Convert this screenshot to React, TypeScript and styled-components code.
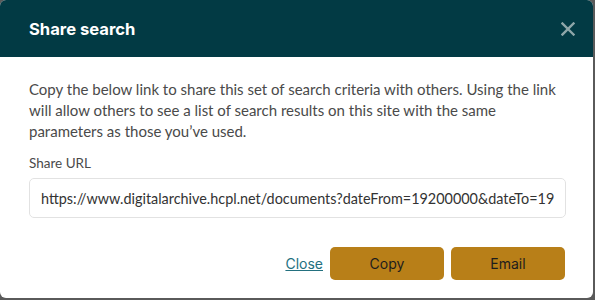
import React from "react";
import styled, { createGlobalStyle } from "styled-components";

const GlobalStyle = createGlobalStyle`
  html, body {
    margin: 0;
    padding: 0;
    background: #5a5a5a;
  }
`;

const StyledModal = styled.div`
  box-sizing: border-box;
  width: 593px;
  height: 298px;
  background: #ffffff;
  border-radius: 6px;
  overflow: hidden;
  display: flex;
  flex-direction: column;
`;

const StyledHeader = styled.div`
  height: 57px;
  background: #023a44;
  display: flex;
  align-items: center;
  justify-content: space-between;
  padding: 0 15px 0 29px;
  box-sizing: border-box;
`;

const StyledTitle = styled.h2`
  margin: 0;
  font-family: Inter, "Liberation Sans", sans-serif;
  font-weight: 700;
  font-size: 16.6px;
  color: #ffffff;
`;

const StyledCloseIcon = styled.button`
  border: none;
  background: none;
  padding: 0;
  width: 20px;
  height: 20px;
  display: flex;
  align-items: center;
  justify-content: center;
  cursor: pointer;
`;

const StyledBody = styled.div`
  padding: 22px 27px 0 29px;
  display: flex;
  flex-direction: column;
  font-family: Lato, "Liberation Sans", sans-serif;
  color: #4a4a4a;
`;

const StyledIntro = styled.p`
  margin: 0 0 13px;
  font-size: 15px;
  line-height: 21px;
`;

const StyledLabel = styled.label`
  font-size: 13.5px;
  line-height: 16px;
  margin-bottom: 7px;
`;

const StyledInput = styled.input`
  box-sizing: border-box;
  width: 537px;
  height: 40px;
  padding: 0 11px;
  border: 1px solid #e2e2e2;
  border-radius: 5px;
  font-family: Lato, "Liberation Sans", sans-serif;
  font-size: 14.4px;
  color: #333333;
  outline: none;
`;

const StyledFooter = styled.div`
  display: flex;
  justify-content: flex-end;
  align-items: center;
  gap: 7px;
  padding: 29px 28px 0 0;
`;

const StyledLink = styled.a`
  font-family: Inter, "Liberation Sans", sans-serif;
  font-size: 14px;
  color: #23707f;
  text-decoration: underline;
  cursor: pointer;
`;

const StyledButton = styled.button`
  width: 114px;
  height: 33px;
  border: none;
  border-radius: 5px;
  background: #b87f18;
  color: #1d1d1d;
  font-family: Inter, "Liberation Sans", sans-serif;
  font-size: 14px;
  cursor: pointer;
`;

const url =
  "https://www.digitalarchive.hcpl.net/documents?dateFrom=19200000&dateTo=19291231";

export default function App() {
  return (
    <>
      <GlobalStyle />
      <StyledModal>
        <StyledHeader>
          <StyledTitle>Share search</StyledTitle>
          <StyledCloseIcon aria-label="Close">
            <svg width="14" height="14" viewBox="0 0 14 14">
              <path
                d="M1.5 1.5 L12.5 12.5 M12.5 1.5 L1.5 12.5"
                stroke="#8ea6a9"
                strokeWidth="2.4"
                strokeLinecap="square"
              />
            </svg>
          </StyledCloseIcon>
        </StyledHeader>
        <StyledBody>
          <StyledIntro>
            Copy the below link to share this set of search criteria with
            others. Using the link will allow others to see a list of search
            results on this site with the same parameters as those you’ve used.
          </StyledIntro>
          <StyledLabel>Share URL</StyledLabel>
          <StyledInput readOnly value={url} />
        </StyledBody>
        <StyledFooter>
          <StyledLink>Close</StyledLink>
          <StyledButton>Copy</StyledButton>
          <StyledButton>Email</StyledButton>
        </StyledFooter>
      </StyledModal>
    </>
  );
}
